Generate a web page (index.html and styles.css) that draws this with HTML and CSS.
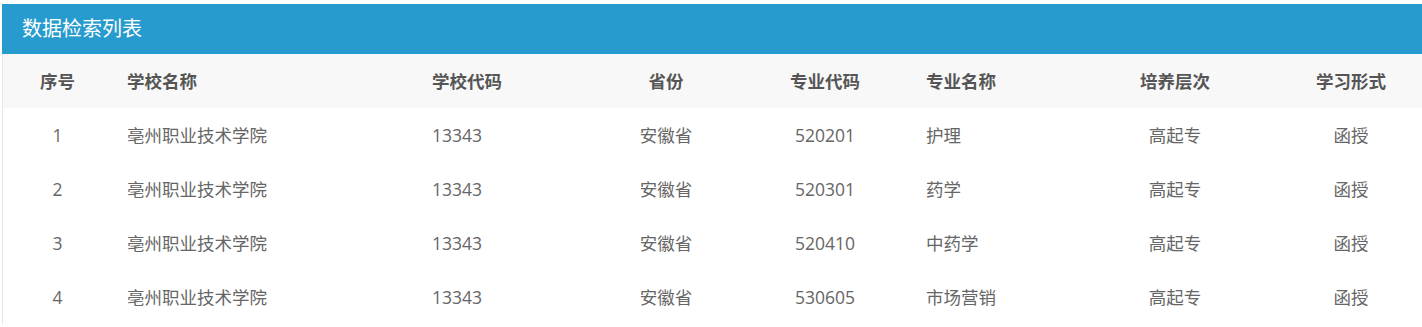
FILE: index.html
```html
<!DOCTYPE html>
<html lang="zh-CN">
<head>
<meta charset="utf-8">
<title>数据检索列表</title>
<link rel="stylesheet" href="styles.css">
</head>
<body>
<div class="page">
  <div class="panel">
    <div class="panel-title">数据检索列表</div>
    <div class="table">
      <div class="row head">
        <div class="c center">序号</div>
        <div class="c left">学校名称</div>
        <div class="c left">学校代码</div>
        <div class="c center">省份</div>
        <div class="c center">专业代码</div>
        <div class="c left">专业名称</div>
        <div class="c center">培养层次</div>
        <div class="c center">学习形式</div>
      </div>
      <div class="row">
        <div class="c center">1</div>
        <div class="c left">亳州职业技术学院</div>
        <div class="c left">13343</div>
        <div class="c center">安徽省</div>
        <div class="c center">520201</div>
        <div class="c left">护理</div>
        <div class="c center">高起专</div>
        <div class="c center">函授</div>
      </div>
      <div class="row">
        <div class="c center">2</div>
        <div class="c left">亳州职业技术学院</div>
        <div class="c left">13343</div>
        <div class="c center">安徽省</div>
        <div class="c center">520301</div>
        <div class="c left">药学</div>
        <div class="c center">高起专</div>
        <div class="c center">函授</div>
      </div>
      <div class="row">
        <div class="c center">3</div>
        <div class="c left">亳州职业技术学院</div>
        <div class="c left">13343</div>
        <div class="c center">安徽省</div>
        <div class="c center">520410</div>
        <div class="c left">中药学</div>
        <div class="c center">高起专</div>
        <div class="c center">函授</div>
      </div>
      <div class="row">
        <div class="c center">4</div>
        <div class="c left">亳州职业技术学院</div>
        <div class="c left">13343</div>
        <div class="c center">安徽省</div>
        <div class="c center">530605</div>
        <div class="c left">市场营销</div>
        <div class="c center">高起专</div>
        <div class="c center">函授</div>
      </div>
    </div>
  </div>
</div>
</body>
</html>
```

FILE: styles.css
```css
html, body {
  margin: 0;
  padding: 0;
  background: #ffffff;
}
body {
  font-family: "Open Sans", "Noto Sans CJK SC", sans-serif;
}
.page {
  padding: 4px 0 0 2px;
}
.panel {
  background: #ffffff;
}
.panel-title {
  height: 50px;
  line-height: 50px;
  background: #279bcd;
  color: #ffffff;
  font-size: 20px;
  padding-left: 20px;
}
.table {
  border-left: 1px solid #e6e6e6;
}
.row {
  display: grid;
  grid-template-columns: 109px 305px 176px 146px 172px 159px 210px 142px;
  height: 54px;
  align-items: center;
  font-size: 17.5px;
  color: #666666;
}
.row.head {
  background: #f8f8f8;
  font-weight: bold;
  color: #555555;
}
.c {
  white-space: nowrap;
  line-height: 24px;
}
.center {
  text-align: center;
}
.left {
  text-align: left;
  padding-left: 15px;
}
```
